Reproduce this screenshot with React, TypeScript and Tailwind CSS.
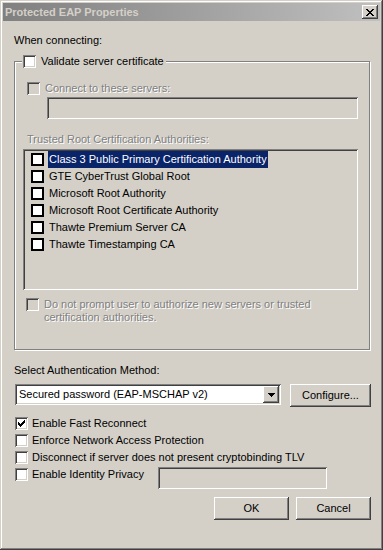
const raised =
  'shadow-[inset_-1px_-1px_0_#404040,inset_1px_1px_0_#fff,inset_-2px_-2px_0_#808080]';
const sunken =
  'shadow-[inset_1px_1px_0_#808080,inset_-1px_-1px_0_#fff,inset_2px_2px_0_#404040,inset_-2px_-2px_0_#d4d0c8]';
const dim = 'text-[#808080] [text-shadow:1px_1px_0_#fff]';

function CheckMark() {
  return (
    <svg width="7" height="7" viewBox="0 0 7 7" shapeRendering="crispEdges">
      <path
        d="M6 0h1v1h-1z M5 1h2v1h-2z M0 2h1v1h-1z M4 2h3v1h-3z M0 3h2v1h-2z M3 3h3v1h-3z M0 4h5v1h-5z M1 5h3v1h-3z M2 6h1v1h-1z"
        fill="#000"
      />
    </svg>
  );
}

function Box({ checked, disabled }: { checked?: boolean; disabled?: boolean }) {
  return (
    <span
      className={`flex h-[13px] w-[13px] shrink-0 items-center justify-center ${sunken} ${
        disabled ? 'bg-[#d4d0c8]' : 'bg-white'
      }`}
    >
      {checked && <CheckMark />}
    </span>
  );
}

function Button({ label, className }: { label: string; className: string }) {
  return (
    <button className={`flex h-[23px] items-center justify-center bg-[#d4d0c8] ${raised} ${className}`}>
      {label}
    </button>
  );
}

const certs = [
  'Class 3 Public Primary Certification Authority',
  'GTE CyberTrust Global Root',
  'Microsoft Root Authority',
  'Microsoft Root Certificate Authority',
  'Thawte Premium Server CA',
  'Thawte Timestamping CA',
];

const options = [
  { label: 'Enable Fast Reconnect', checked: true },
  { label: 'Enforce Network Access Protection' },
  { label: 'Disconnect if server does not present cryptobinding TLV' },
];

export default function App() {
  return (
    <div className="flex h-[550px] w-[383px] flex-col bg-[#d4d0c8] p-[3px] font-['Liberation_Sans',Arial,sans-serif] text-[11px] leading-[13px] text-black shadow-[inset_-1px_-1px_0_#404040,inset_1px_1px_0_#d4d0c8,inset_-2px_-2px_0_#808080,inset_2px_2px_0_#fff]">
      {/* title bar (inactive) */}
      <div className="flex h-[18px] shrink-0 items-center justify-between bg-linear-to-r from-[#808080] to-[#c0c0c0] px-[2px]">
        <span className="font-bold text-[#d4d0c8]">Protected EAP Properties</span>
        <span className={`flex h-[14px] w-[16px] items-center justify-center bg-[#d4d0c8] ${raised}`}>
          <svg width="8" height="7" viewBox="0 0 8 7" shapeRendering="crispEdges">
            <path
              d="M0 0h2v1h-2z M6 0h2v1h-2z M1 1h2v1h-2z M5 1h2v1h-2z M2 2h4v1h-4z M3 3h2v1h-2z M2 4h4v1h-4z M1 5h2v1h-2z M5 5h2v1h-2z M0 6h2v1h-2z M6 6h2v1h-2z"
              fill="#000"
            />
          </svg>
        </span>
      </div>

      <div className="flex flex-col pl-[11px] pr-[9px] pt-[13px]">
        <div>When connecting:</div>

        {/* group box */}
        <div className="relative mt-[14px] h-[289px] w-[356px] border border-[#808080] shadow-[inset_1px_1px_0_#fff,1px_1px_0_#fff]">
          <label className="absolute left-[7px] top-[-7px] flex items-center gap-[5px] bg-[#d4d0c8] pl-[1px] pr-[2px]">
            <Box />
            <span>Validate server certificate</span>
          </label>

          <div className="flex flex-col pl-[8px] pt-[20px]">
            <div className="ml-[4px] flex items-center gap-[5px]">
              <Box disabled />
              <span className={dim}>Connect to these servers:</span>
            </div>
            <div className={`ml-[24px] mt-[2px] h-[22px] w-[311px] ${sunken}`} />

            <div className={`ml-[4px] mt-[14px] ${dim}`}>Trusted Root Certification Authorities:</div>

            <div className={`mt-[3px] flex h-[141px] w-[335px] flex-col p-[2px] ${sunken}`}>
              {certs.map((c, i) => (
                <div key={c} className="flex h-[17px] items-center gap-[4px] pl-[6px]">
                  <span className="h-[13px] w-[13px] shrink-0 border-2 border-black bg-white" />
                  <span
                    className={`flex h-[17px] items-center px-[1px] ${
                      i === 0 ? 'bg-[#0a246a] text-white' : ''
                    }`}
                  >
                    {c}
                  </span>
                </div>
              ))}
            </div>

            <div className="ml-[3px] mt-[8px] flex items-start gap-[5px]">
              <Box disabled />
              <span className={dim}>
                Do not prompt user to authorize new servers or trusted
                <br />
                certification authorities.
              </span>
            </div>
          </div>
        </div>

        <div className="mt-[14px]">Select Authentication Method:</div>

        <div className="mt-[7px] flex items-start">
          <div className={`ml-[1px] flex h-[21px] w-[266px] items-center justify-between bg-white p-[2px] ${sunken}`}>
            <span className="pl-[2px]">Secured password (EAP-MSCHAP v2)</span>
            <span className={`flex h-[17px] w-[16px] items-center justify-center bg-[#d4d0c8] ${raised}`}>
              <svg width="7" height="4" viewBox="0 0 7 4" shapeRendering="crispEdges">
                <path d="M0 0h7v1h-7z M1 1h5v1h-5z M2 2h3v1h-3z M3 3h1v1h-1z" fill="#000" />
              </svg>
            </span>
          </div>
          <Button label="Configure..." className="ml-[9px] w-[81px]" />
        </div>

        <div className="ml-[1px] mt-[10px] flex flex-col gap-[4px]">
          {options.map((o) => (
            <div key={o.label} className="flex h-[13px] items-center gap-[4px]">
              <Box checked={o.checked} />
              <span>{o.label}</span>
            </div>
          ))}
          <div className="flex items-start">
            <div className="flex h-[13px] items-center gap-[4px]">
              <Box />
              <span className="w-[126px]">Enable Identity Privacy</span>
            </div>
            <div className={`mt-[-1px] h-[22px] w-[169px] ${sunken}`} />
          </div>
        </div>

        <div className="mt-[8px] flex justify-end gap-[7px]">
          <Button label="OK" className="w-[75px]" />
          <Button label="Cancel" className="w-[75px]" />
        </div>
      </div>
    </div>
  );
}
